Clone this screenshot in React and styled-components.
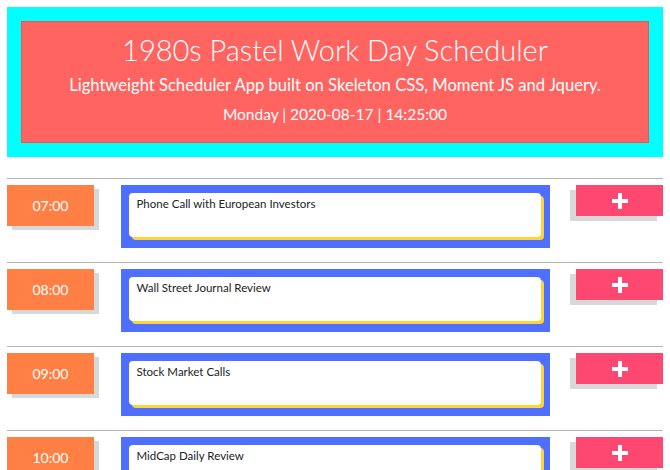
import React from 'react';
import styled, { createGlobalStyle } from 'styled-components';

const GlobalStyle = createGlobalStyle`
    body {
        margin: 0;
        background: #ffffff;
        font-family: Lato, "Open Sans", sans-serif;
    }
`;

const Page = styled.div`
    padding: 7px;
`;

const Header = styled.header`
    background: #00ffff;
    padding: 14px;
    margin-bottom: 21px;
`;

const Jumbotron = styled.div`
    height: 122px;
    box-sizing: border-box;
    background: #ff6461;
    border: 1px solid #e25a57;
    color: #ffffff;
    display: flex;
    flex-direction: column;
    align-items: center;
    padding-top: 9px;
`;

const Title = styled.h1`
    margin: 0;
    font-weight: 300;
    font-size: 29px;
    line-height: 38px;
`;

const Lead = styled.p`
    margin: 2px 0 0;
    font-size: 16.6px;
    line-height: 29px;
`;

const Today = styled.p`
    margin: 0;
    font-size: 15.5px;
    line-height: 29px;
`;

const Row = styled.div`
    border-top: 1px solid #b5b5b5;
    padding: 6px 0 14px;
    display: grid;
    grid-template-columns: 87px 429px 87px;
    justify-content: space-between;
    align-items: start;
`;

const Hour = styled.div`
    height: 41px;
    background: #ff7f45;
    color: #ffffff;
    font-size: 14px;
    display: flex;
    align-items: center;
    justify-content: center;
    box-shadow: 5px 4px 0 #d8d8d8;
`;

const EventFrame = styled.div`
    height: 63px;
    box-sizing: border-box;
    background: #4e6fff;
    padding: 8px 9px 11px 8px;
`;

const EventText = styled.textarea`
    display: block;
    width: 100%;
    height: 100%;
    box-sizing: border-box;
    border: none;
    border-radius: 4px;
    background: #ffffff;
    box-shadow: 3px 3px 0 #ffd43b;
    padding: 4px 8px;
    resize: none;
    font-family: Lato, "Open Sans", sans-serif;
    font-size: 11.5px;
    color: #222222;
    outline: none;
`;

const SaveButton = styled.button`
    height: 31px;
    border: none;
    background: #ff4871;
    box-shadow: -6px 5px 0 #d8d8d8;
    display: flex;
    align-items: center;
    justify-content: center;
    cursor: pointer;
    padding: 0;
`;

function PlusIcon() {
    return (
        <svg width="16" height="16" viewBox="0 0 16 16">
            <rect x="6" y="0" width="4" height="16" fill="#ffffff" />
            <rect x="0" y="6" width="16" height="4" fill="#ffffff" />
        </svg>
    );
}

const schedule = [
    { hour: '07:00', text: 'Phone Call with European Investors' },
    { hour: '08:00', text: 'Wall Street Journal Review' },
    { hour: '09:00', text: 'Stock Market Calls' },
    { hour: '10:00', text: 'MidCap Daily Review' },
    { hour: '11:00', text: '' },
    { hour: '12:00', text: '' },
];

export default function App() {
    return (
        <>
            <GlobalStyle />
            <Page>
                <Header>
                    <Jumbotron>
                        <Title>1980s Pastel Work Day Scheduler</Title>
                        <Lead>Lightweight Scheduler App built on Skeleton CSS, Moment JS and Jquery.</Lead>
                        <Today>Monday | 2020-08-17 | 14:25:00</Today>
                    </Jumbotron>
                </Header>
                {schedule.map((slot) => (
                    <Row key={slot.hour}>
                        <Hour>{slot.hour}</Hour>
                        <EventFrame>
                            <EventText defaultValue={slot.text} />
                        </EventFrame>
                        <SaveButton aria-label="save">
                            <PlusIcon />
                        </SaveButton>
                    </Row>
                ))}
            </Page>
        </>
    );
}
